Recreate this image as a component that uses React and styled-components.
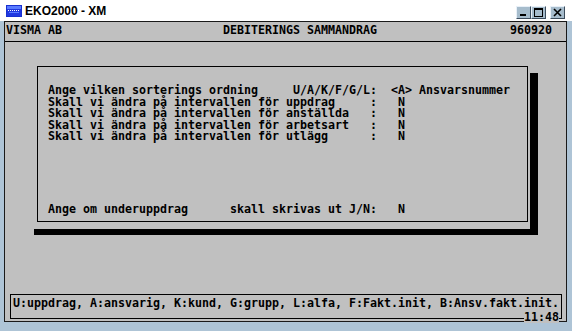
import React from 'react';
import styled, { createGlobalStyle } from 'styled-components';

const GlobalStyle = createGlobalStyle`
  html, body {
    margin: 0;
    padding: 0;
    background: #aec4d6;
  }
`

const Window = styled.div`
  width: 572px;
  height: 331px;
  box-sizing: border-box;
  padding-bottom: 9px;
  display: flex;
  flex-direction: column;
  background: #aec4d6;
  overflow: hidden;
`

const TitleBar = styled.div`
  height: 21px;
  flex: none;
  display: flex;
  align-items: center;
  padding: 0 7px 0 6px;
  background: #fff;
  font-family: "Liberation Sans", Arial, sans-serif;
  font-weight: bold;
  font-size: 12px;
  color: #000;
`

const TitleText = styled.span`
  margin-left: 3px;
  flex: 1;
`

const Buttons = styled.div`
  display: flex;
  align-self: flex-start;
  margin-top: 6px;
`

const WinButton = styled.div`
  width: 15px;
  height: 13px;
  box-sizing: border-box;
  margin-left: ${p => (p.$gap ? '4px' : '0')};
  display: flex;
  align-items: center;
  justify-content: center;
  background: #a6bccc;
  border-top: 1px solid #e8f0f8;
  border-left: 1px solid #e8f0f8;
  border-right: 1px solid #3c4c5c;
  border-bottom: 1px solid #3c4c5c;
`

const Screen = styled.div`
  flex: 1;
  margin: 0 5px 0 4px;
  display: flex;
  flex-direction: column;
  border: 1px solid #1a1a1a;
  background: #c0c0c0;
  font-family: "DejaVu Sans Mono", "Liberation Mono", monospace;
  font-weight: bold;
  font-size: 11.63px;
  line-height: 12px;
  color: #000;
  white-space: pre;
`

const Header = styled.div`
  height: 20px;
  box-sizing: border-box;
  padding: 1.5px 0 0 1px;
  border-bottom: 1px solid #000;
`

const Dialog = styled.div`
  position: relative;
  width: 491px;
  height: 156px;
  box-sizing: border-box;
  margin: 24px 0 0 32px;
  padding: 18px 0 5px 10px;
  display: flex;
  flex-direction: column;
  border: 1px solid #000;

  &::after {
    content: '';
    position: absolute;
    left: -4px;
    top: 6px;
    right: -11px;
    bottom: -14px;
    border-right: 8px solid #000;
    border-bottom: 6px solid #000;
    pointer-events: none;
  }
`

const Row = styled.div`
  line-height: 11.6px;
  margin-top: ${p => (p.$last ? 'auto' : '0')};
`

const StatusBox = styled.div`
  position: relative;
  height: 25px;
  box-sizing: border-box;
  margin: auto 4px 2px 5px;
  padding: 2px 0 0 2px;
  border: 1px solid #000;
`

const Clock = styled.span`
  position: absolute;
  right: 2px;
  top: 16px;
  background: #c0c0c0;
`

const AppIcon = () => (
  <svg width="16" height="12" viewBox="0 0 16 12">
    <rect x="0" y="0" width="16" height="12" fill="#1830d0" />
    <rect x="1" y="1" width="14" height="3" fill="#5a7cff" />
    <rect x="1" y="4" width="14" height="7" fill="#2038e0" />
    {[2, 4, 6, 8, 10, 12].map(x => (
      <rect key={x} x={x} y="5" width="1" height="1" fill="#fff" />
    ))}
    <rect x="3" y="7" width="10" height="1" fill="#5a7cff" />
  </svg>
)

const dialogRows = [
  'Ange vilken sorterings ordning     U/A/K/F/G/L:  <A> Ansvarsnummer',
  'Skall vi ändra på intervallen för uppdrag     :   N',
  'Skall vi ändra på intervallen för anställda   :   N',
  'Skall vi ändra på intervallen för arbetsart   :   N',
  'Skall vi ändra på intervallen för utlägg      :   N',
]

const App = () => (
  <Window>
    <GlobalStyle />
    <TitleBar>
      <AppIcon />
      <TitleText>EKO2000 - XM</TitleText>
      <Buttons>
        <WinButton>
          <svg width="9" height="9" viewBox="0 0 9 9">
            <rect x="1" y="6" width="6" height="2" fill="#000" />
          </svg>
        </WinButton>
        <WinButton>
          <svg width="9" height="9" viewBox="0 0 9 9">
            <rect x="0.5" y="0.5" width="8" height="8" fill="none" stroke="#000" />
            <rect x="0" y="0" width="9" height="2" fill="#000" />
          </svg>
        </WinButton>
        <WinButton $gap>
          <svg width="9" height="9" viewBox="0 0 9 9">
            <path d="M1 1 L8 8 M8 1 L1 8" stroke="#000" strokeWidth="1.6" />
          </svg>
        </WinButton>
      </Buttons>
    </TitleBar>
    <Screen>
      <Header>{'VISMA AB                       DEBITERINGS SAMMANDRAG                   960920'}</Header>
      <Dialog>
        {dialogRows.map((r, i) => (
          <Row key={i}>{r}</Row>
        ))}
        <Row $last>{'Ange om underuppdrag      skall skrivas ut J/N:   N'}</Row>
      </Dialog>
      <StatusBox>
        {'U:uppdrag, A:ansvarig, K:kund, G:grupp, L:alfa, F:Fakt.init, B:Ansv.fakt.init.'}
        <Clock>11:48</Clock>
      </StatusBox>
    </Screen>
  </Window>
)

export default App
